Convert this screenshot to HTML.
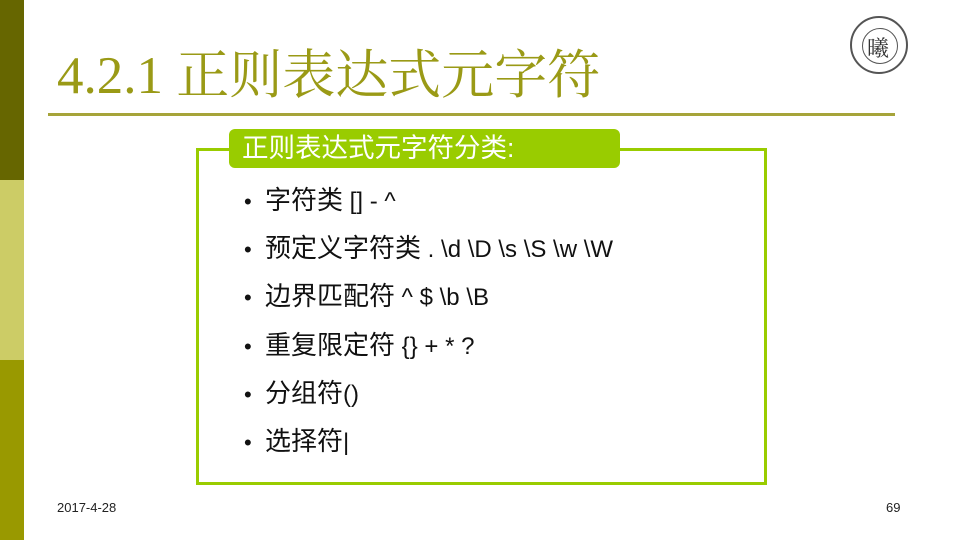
<!DOCTYPE html>
<html><head><meta charset="utf-8"><style>
body{margin:0;width:960px;height:540px;position:relative;overflow:hidden;background:#fff;font-family:"Liberation Sans","Noto Sans CJK SC",sans-serif}
.bar{position:absolute;left:0;width:24px}
.t{position:absolute;left:57px;top:44px;font-family:"Liberation Serif","Noto Serif CJK SC",serif;font-size:53px;color:#9a9a16;white-space:nowrap;line-height:64px}
.line{position:absolute;left:48px;top:113px;width:847px;height:3px;background:#a6a43a}
.box{position:absolute;left:196px;top:148px;width:565px;height:331px;border:3px solid #99cc00}
.lab{position:absolute;left:229px;top:129px;width:391px;height:39px;background:#99cc00;border-radius:6px;color:#fff;font-size:26.5px;line-height:39px;padding-left:13px;box-sizing:border-box;white-space:nowrap}
ul{position:absolute;left:244px;top:182px;margin:0;padding:0;list-style:none}
li{font-size:24px;height:48.2px;line-height:36px;color:#111;white-space:nowrap}
li b{font-weight:normal;font-size:26px}
li:before{content:"•";display:inline-block;width:21px;font-size:22px}
.f{position:absolute;top:500px;font-size:13px;color:#222}
.seal{position:absolute;left:850px;top:16px;width:58px;height:58px;border:2px solid #555;border-radius:50%;box-sizing:border-box}
.seal:after{content:"";position:absolute;left:10px;top:10px;width:34px;height:34px;border:1.5px solid #555;border-radius:50%}
.seal span{position:absolute;left:15px;top:14px;font-size:22px;color:#333;font-family:"Noto Serif CJK SC",serif}
</style></head><body>
<div class="bar" style="top:0;height:180px;background:#666600"></div>
<div class="bar" style="top:180px;height:180px;background:#cccc66"></div>
<div class="bar" style="top:360px;height:180px;background:#999900"></div>
<div class="t">4.2.1 正则表达式元字符</div>
<div class="line"></div>
<div class="seal"><span>曦</span></div>
<div class="box"></div>
<div class="lab">正则表达式元字符分类:</div>
<ul>
<li><b>字符类</b> [] - ^</li>
<li><b>预定义字符类</b> . \d \D \s \S \w \W</li>
<li><b>边界匹配符</b> ^ $ \b \B</li>
<li><b>重复限定符</b> {} + * ?</li>
<li><b>分组符</b>()</li>
<li><b>选择符</b>|</li>
</ul>
<div class="f" style="left:57px">2017-4-28</div>
<div class="f" style="left:886px">69</div>
</body></html>
